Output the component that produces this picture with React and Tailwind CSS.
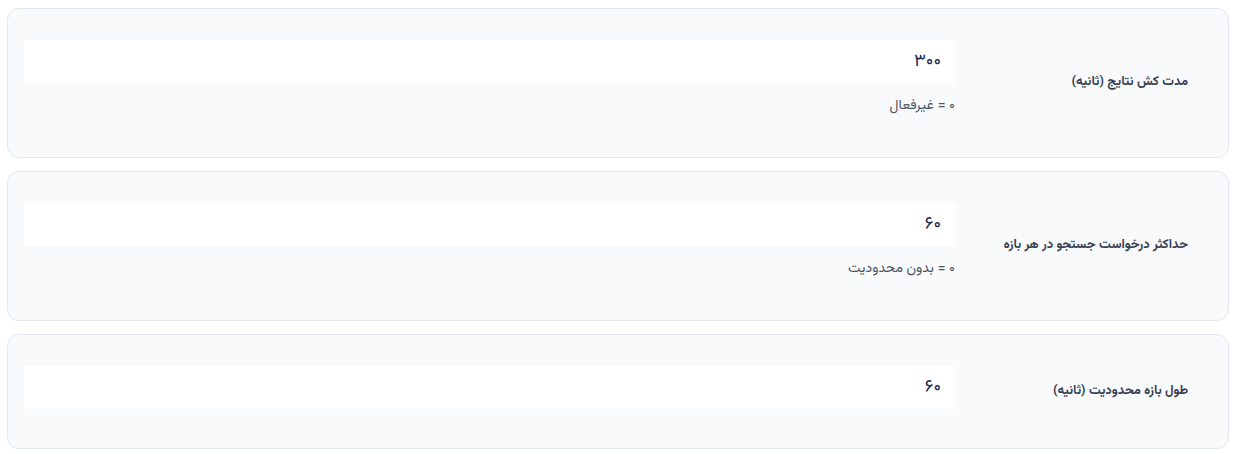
import React from 'react';

const FIELDS = [
  { label: 'مدت کش نتایج (ثانیه)', value: '۳۰۰', hint: '۰ = غیرفعال' },
  { label: 'حداکثر درخواست جستجو در هر بازه', value: '۶۰', hint: '۰ = بدون محدودیت' },
  { label: 'طول بازه محدودیت (ثانیه)', value: '۶۰', hint: null },
];

function Field({ label, value, hint }) {
  return (
    <div className="flex items-center bg-[#f8fafc] border border-[#e2e8f0] rounded-xl px-4 py-[31px]">
      <div className="w-[257px] shrink-0 pr-6 text-[13px] font-bold text-[#374151]">{label}</div>
      <div className="flex-1">
        <input
          readOnly
          value={value}
          className="block w-full h-[43px] bg-white px-[14px] text-[18px] text-[#1e2a4f] outline-none"
        />
        {hint ? (
          <div className="mt-[13px] mb-[10px] text-[14px] leading-[20px] text-[#4b5563]">{hint}</div>
        ) : (
          <div className="h-2" />
        )}
      </div>
    </div>
  );
}

export default function App() {
  return (
    <div dir="rtl" className="min-h-screen bg-white pt-2 pl-[7px] pr-[10px] flex flex-col gap-[13px]" style={{ fontFamily: '"Vazirmatn", serif' }}>
      {FIELDS.map((f, i) => (
        <Field key={i} {...f} />
      ))}
    </div>
  );
}
